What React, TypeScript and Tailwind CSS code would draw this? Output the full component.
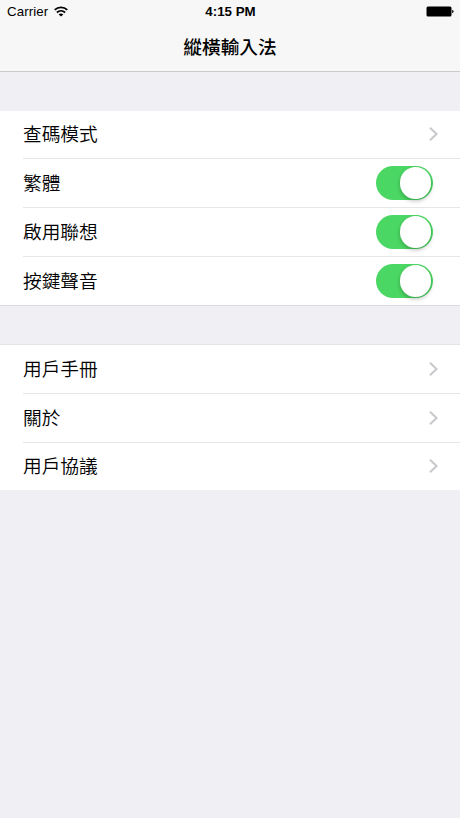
import { useState } from 'react';

function Chevron() {
  return (
    <svg className="mr-[22px] h-[15px] w-[9px] shrink-0" viewBox="0 0 9 15" fill="none">
      <path d="M1 0.8L7.6 7L1 13.2" stroke="#c7c7cc" strokeWidth="2" />
    </svg>
  );
}

function Toggle({ on, onChange }: { on: boolean; onChange: () => void }) {
  return (
    <button
      type="button"
      role="switch"
      aria-checked={on}
      onClick={onChange}
      className={`mr-[27.5px] flex h-[34.5px] w-[56.5px] shrink-0 items-center rounded-full px-[1.5px] ${on ? 'justify-end bg-[#4bd763]' : 'justify-start bg-[#e5e5e5]'}`}
    >
      <span className="size-[31.5px] rounded-full bg-white shadow-[0_2px_4px_rgba(0,0,0,0.25)]" />
    </button>
  );
}

const settings = [
  { id: 'mode', label: '查碼模式', toggle: false, height: 'h-[48px]' },
  { id: 'traditional', label: '繁體', toggle: true, height: 'h-[49px]' },
  { id: 'suggest', label: '啟用聯想', toggle: true, height: 'h-[49px]' },
  { id: 'sound', label: '按鍵聲音', toggle: true, height: 'h-[48px]' },
];

const links = [
  { id: 'manual', label: '用戶手冊', height: 'h-[49px]' },
  { id: 'about', label: '關於', height: 'h-[49px]' },
  { id: 'terms', label: '用戶協議', height: 'h-[47px]' },
];

export default function App() {
  const [values, setValues] = useState<Record<string, boolean>>({ traditional: true, suggest: true, sound: true });

  const flip = (id: string) => setValues({ ...values, [id]: !values[id] });

  return (
    <div className="h-[818px] w-[460px] overflow-hidden bg-[#efeff4] font-['Liberation_Sans','Noto_Sans_CJK_TC',sans-serif] text-black">
      <header className="h-[72px] border-b border-[#cbcbce] bg-[#f7f7f7]">
        <div className="grid h-[23px] grid-cols-3 items-center pl-[7px] pr-[6px] text-[13.3px] leading-none">
          <div className="flex items-center gap-[6px]">
            <span className="tracking-[0.1px]">Carrier</span>
            <svg className="h-[11px] w-[14px]" viewBox="0 0 14 11" fill="none" stroke="#000" strokeWidth="1.8">
              <path d="M0.7 3.9C4.3 0.4 9.7 0.4 13.3 3.9" />
              <path d="M2.9 6.5C5.3 4.3 8.7 4.3 11.1 6.5" />
              <path d="M4.7 8.4C6 7.2 8 7.2 9.3 8.4L7 10.6Z" fill="#000" stroke="none" />
            </svg>
          </div>
          <span className="text-center font-bold">4:15 PM</span>
          <svg className="h-[11px] w-[28px] justify-self-end" viewBox="0 0 28 11">
            <rect x="0.5" y="0.5" width="25" height="10" rx="1.5" />
            <path d="M26.2 3.8Q27.6 4.2 27.6 5.5Q27.6 6.8 26.2 7.2Z" />
          </svg>
        </div>
        <h1 className="flex h-[48px] items-center justify-center pt-[2px] text-[18.7px] font-medium">縱橫輸入法</h1>
      </header>

      <main>
        <section className="mt-[39px] border-b border-[#dcdce0] bg-white">
          {settings.map((item, i) => (
            <div key={item.id} className={`flex pl-[23px] ${item.height}`}>
              <div className={`flex flex-1 items-center justify-between ${i < settings.length - 1 ? 'border-b border-[#e6e6e8]' : ''}`}>
                <span className="pt-[2px] text-[18.7px] leading-none font-[350]">{item.label}</span>
                {item.toggle ? <Toggle on={values[item.id]} onChange={() => flip(item.id)} /> : <Chevron />}
              </div>
            </div>
          ))}
        </section>

        <section className="mt-[38px] border-t border-[#e4e4e8] bg-white">
          {links.map((item, i) => (
            <div key={item.id} className={`flex pl-[23px] ${item.height}`}>
              <div className={`flex flex-1 items-center justify-between ${i < links.length - 1 ? 'border-b border-[#e6e6e8]' : ''}`}>
                <span className="pt-[2px] text-[18.7px] leading-none font-[350]">{item.label}</span>
                <Chevron />
              </div>
            </div>
          ))}
        </section>
      </main>
    </div>
  );
}
